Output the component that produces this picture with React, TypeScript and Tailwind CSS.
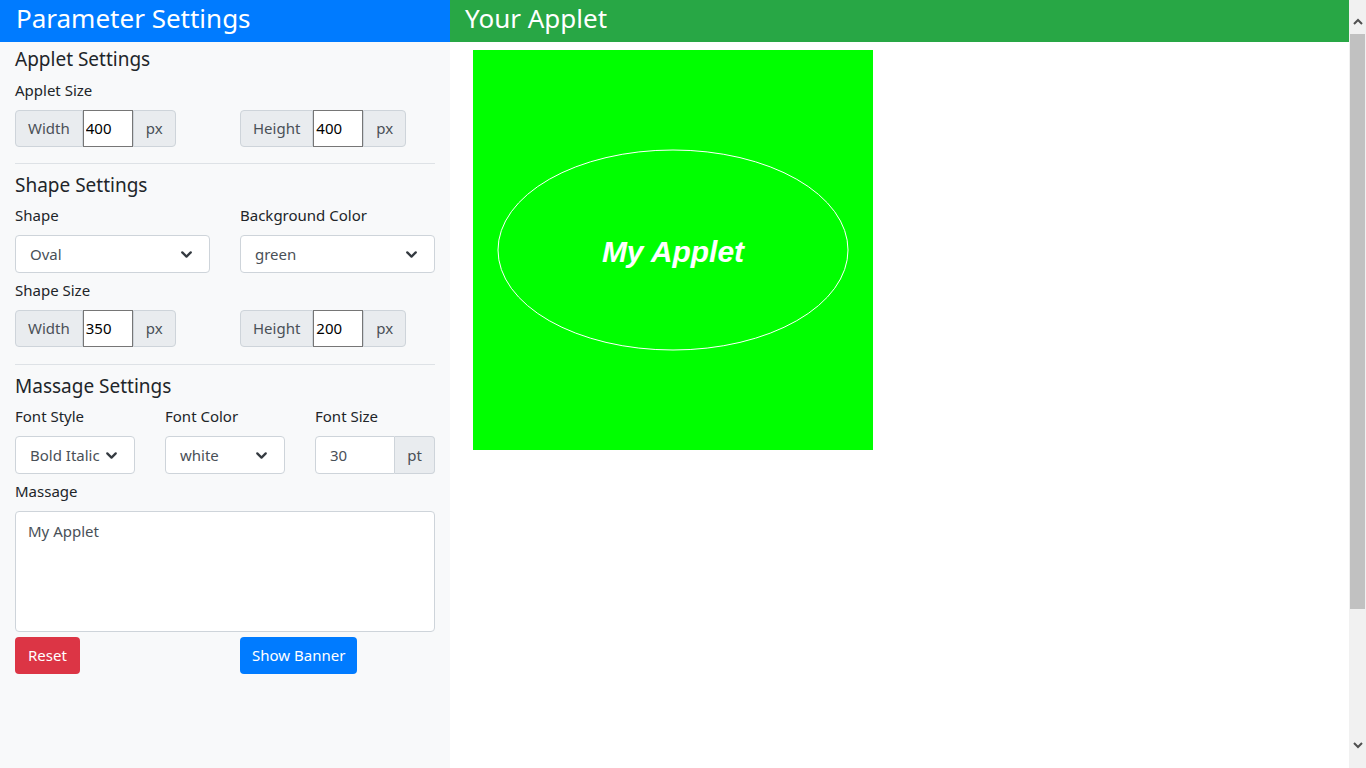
import { ChevronDown } from 'lucide-react'

const font = { fontFamily: '"Segoe UI", "Noto Sans", sans-serif' }

function SizeGroup({ label, value, unit }: { label: string; value: string; unit: string }) {
  return (
    <div className="flex h-[37px] text-[15px] text-[#495057]">
      <span className="flex items-center rounded-l-[4px] border border-[#ced4da] bg-[#e9ecef] px-3">{label}</span>
      <input
        readOnly
        value={value}
        className="w-[50px] border border-[#767676] bg-white px-[2px] text-[15px] text-black outline-none"
      />
      <span className="flex items-center rounded-r-[4px] border border-[#ced4da] bg-[#e9ecef] px-3">{unit}</span>
    </div>
  )
}

function Select({ value }: { value: string }) {
  return (
    <div className="flex h-[38px] items-center justify-between rounded-[4px] border border-[#ced4da] bg-white pl-[14px] pr-[14px] text-[15px] text-[#495057]">
      <span className="whitespace-nowrap">{value}</span>
      <ChevronDown className="h-[17px] w-[17px] shrink-0 text-[#343a40]" strokeWidth={3.2} />
    </div>
  )
}

function Label({ children }: { children: React.ReactNode }) {
  return <div className="mb-2 text-[15px] leading-[24px] text-[#212529]">{children}</div>
}

function Scrollbar() {
  return (
    <div className="flex w-[17px] shrink-0 flex-col bg-[#f1f1f1]">
      <div className="flex h-[34px] items-start justify-center pt-[18px]">
        <svg width="10" height="7" viewBox="0 0 10 7">
          <polyline points="1,6 5,2 9,6" fill="none" stroke="#505050" strokeWidth="2" />
        </svg>
      </div>
      <div className="mx-[1px] h-[575px] bg-[#c1c1c1]" />
      <div className="flex-1" />
      <div className="flex h-[30px] items-start justify-center pt-[4px]">
        <svg width="10" height="7" viewBox="0 0 10 7">
          <polyline points="1,1 5,5 9,1" fill="none" stroke="#505050" strokeWidth="2" />
        </svg>
      </div>
    </div>
  )
}

export default function App() {
  return (
    <div className="flex h-screen overflow-hidden" style={font}>
      <div className="w-[450px] shrink-0 bg-[#f8f9fa]">
        <h2 className="h-[42px] bg-[#007bff] px-4 pt-[1px] text-[26px] leading-[34px] text-white">Parameter Settings</h2>
        <div className="px-[15px] text-[#212529]">
          <h5 className="mt-[5px] mb-[7px] text-[19px] leading-[24px]">Applet Settings</h5>
          <Label>Applet Size</Label>
          <div className="grid grid-cols-2 gap-[30px]">
            <div className="flex">
              <SizeGroup label="Width" value="400" unit="px" />
            </div>
            <div className="flex">
              <SizeGroup label="Height" value="400" unit="px" />
            </div>
          </div>
          <hr className="mt-4 mb-[9px] border-[#dee2e6]" />

          <h5 className="mb-[6px] text-[19px] leading-[24px]">Shape Settings</h5>
          <div className="grid grid-cols-2 gap-x-[30px]">
            <div>
              <Label>Shape</Label>
              <Select value="Oval" />
            </div>
            <div>
              <Label>Background Color</Label>
              <Select value="green" />
            </div>
          </div>
          <div className="mt-[5px]">
            <Label>Shape Size</Label>
          </div>
          <div className="grid grid-cols-2 gap-[30px]">
            <div className="flex">
              <SizeGroup label="Width" value="350" unit="px" />
            </div>
            <div className="flex">
              <SizeGroup label="Height" value="200" unit="px" />
            </div>
          </div>
          <hr className="mt-[17px] mb-[9px] border-[#dee2e6]" />

          <h5 className="mb-[6px] text-[19px] leading-[24px]">Massage Settings</h5>
          <div className="grid grid-cols-3 gap-x-[30px]">
            <div>
              <Label>Font Style</Label>
              <Select value="Bold Italic" />
            </div>
            <div>
              <Label>Font Color</Label>
              <Select value="white" />
            </div>
            <div>
              <Label>Font Size</Label>
              <div className="flex h-[38px] text-[15px] text-[#495057]">
                <div className="flex min-w-0 flex-1 items-center rounded-l-[4px] border border-[#ced4da] bg-white px-[14px]">30</div>
                <span className="flex items-center rounded-r-[4px] border border-l-0 border-[#ced4da] bg-[#e9ecef] px-3">pt</span>
              </div>
            </div>
          </div>
          <div className="mt-[5px]">
            <Label>Massage</Label>
          </div>
          <div className="h-[121px] rounded-[4px] border border-[#ced4da] bg-white px-3 py-[7px] text-[15px] leading-[24px] text-[#495057]">
            My Applet
          </div>
          <div className="mt-[5px] grid grid-cols-2 gap-x-[30px]">
            <div>
              <button className="h-[37px] rounded-[4px] bg-[#dc3545] px-[13px] text-[15px] text-white">Reset</button>
            </div>
            <div>
              <button className="h-[37px] rounded-[4px] bg-[#007bff] px-3 text-[15px] text-white">Show Banner</button>
            </div>
          </div>
        </div>
      </div>

      <div className="flex-1 bg-white">
        <h2 className="h-[42px] bg-[#28a745] px-[15px] pt-[1px] text-[26px] leading-[34px] text-white">Your Applet</h2>
        <div className="pt-2 pl-[23px]">
          <svg width="400" height="400" className="block">
            <rect width="400" height="400" fill="#00ff00" />
            <ellipse cx="200" cy="200" rx="175" ry="100" fill="none" stroke="#ffffff" strokeWidth="1" />
            <text
              x="200"
              y="212"
              textAnchor="middle"
              fill="#ffffff"
              fontSize="30"
              fontWeight="bold"
              fontStyle="italic"
              fontFamily='"Liberation Sans", Arial, sans-serif'
            >
              My Applet
            </text>
          </svg>
        </div>
      </div>
      <Scrollbar />
    </div>
  )
}
